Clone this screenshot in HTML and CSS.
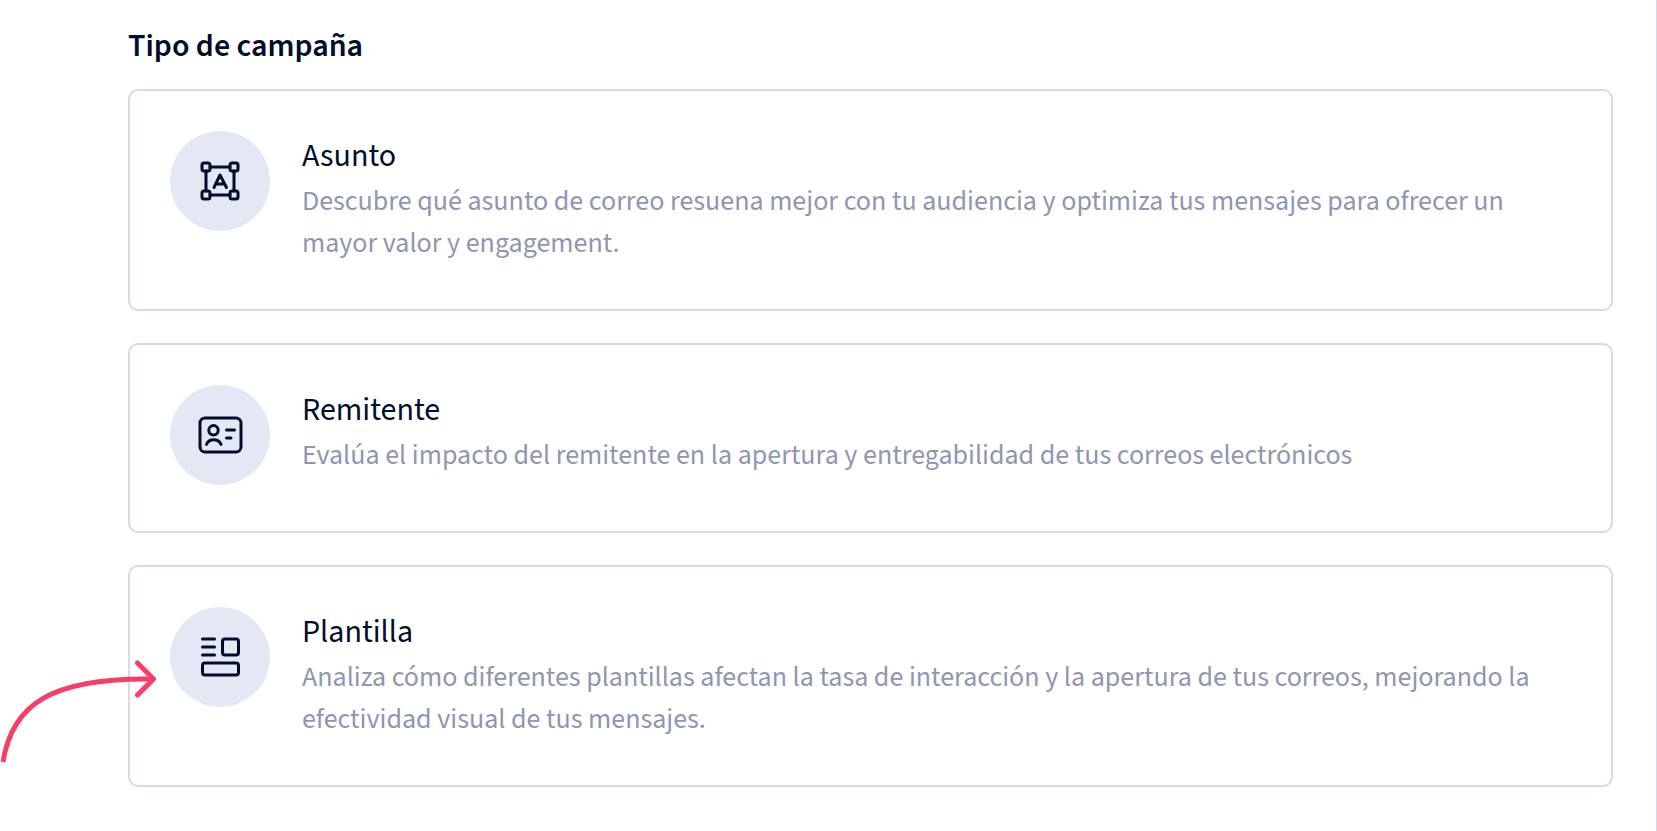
FILE: index.html
```html
<!DOCTYPE html>
<html lang="es">
<head>
<meta charset="utf-8">
<meta name="viewport" content="width=device-width, initial-scale=1">
<title>Tipo de campaña</title>
<link rel="stylesheet" href="styles.css">
</head>
<body>
<main class="panel">
  <h1 class="heading">Tipo de campaña</h1>
  <div class="options">
    <button type="button" class="card">
      <span class="badge">
        <svg class="icon" viewBox="0 0 48 48" aria-hidden="true">
          <rect x="6" y="6" width="8" height="8" rx="2"/>
          <rect x="34" y="6" width="8" height="8" rx="2"/>
          <rect x="6" y="34" width="8" height="8" rx="2"/>
          <rect x="34" y="34" width="8" height="8" rx="2"/>
          <path d="M14 10H34M14 38H34M10 14V34M38 14V34"/>
          <path d="M18 30.500L24 18L30.500 30.500M20.500 27H28.500"/>
        </svg>
      </span>
      <span class="text">
        <span class="title">Asunto</span>
        <span class="desc">Descubre qué asunto de correo resuena mejor con tu audiencia y optimiza tus mensajes para ofrecer un mayor valor y engagement.</span>
      </span>
    </button>
    <button type="button" class="card">
      <span class="badge">
        <svg class="icon" viewBox="0 0 48 48" aria-hidden="true">
          <rect x="4" y="7" width="41" height="34" rx="5"/>
          <circle cx="17.500" cy="19.300" r="4.700"/>
          <path d="M10.500 33.300C12 30 14.500 28.700 17.700 28.700S23.500 30 25 33.300"/>
          <path d="M30.500 19H38.500M30.500 27H35"/>
        </svg>
      </span>
      <span class="text">
        <span class="title">Remitente</span>
        <span class="desc">Evalúa el impacto del remitente en la apertura y entregabilidad de tus correos electrónicos</span>
      </span>
    </button>
    <button type="button" class="card">
      <span class="badge">
        <svg class="icon" viewBox="0 0 48 48" aria-hidden="true">
          <path d="M6.500 6H18.500M6.500 14H18.500M6.500 22H18.500"/>
          <rect x="26.500" y="6" width="16" height="16" rx="2.500"/>
          <rect x="6.500" y="30" width="36" height="12" rx="2.500"/>
        </svg>
      </span>
      <span class="text">
        <span class="title">Plantilla</span>
        <span class="desc">Analiza cómo diferentes plantillas afectan la tasa de interacción y la apertura de tus correos, mejorando la efectividad visual de tus mensajes.</span>
      </span>
      <svg class="arrow" viewBox="0 0 160 110" aria-hidden="true">
        <path d="M3 102C12 44 52 18 150 19"/>
        <path class="arrow-head" d="M137.500 3L153.500 19L137.500 35"/>
      </svg>
    </button>
  </div>
</main>
</body>
</html>
```

FILE: styles.css
```css
* {
  box-sizing: border-box;
}

body {
  margin: 0;
  background: #fff;
  color: #020d2c;
  font-family: "Source Sans 3", "Source Sans Pro", "Noto Sans CJK SC", sans-serif;
}

.panel {
  min-height: 100vh;
  padding: 20px 43px 43px 128px;
  border-right: 1px solid #d6d9e8;
}

.heading {
  margin: 0 0 17px;
  font-size: 32px;
  line-height: 52px;
  font-weight: 600;
}

.options {
  display: flex;
  flex-direction: column;
  gap: 32px;
}

.card {
  position: relative;
  display: flex;
  align-items: flex-start;
  gap: 32px;
  width: 100%;
  min-height: 190px;
  padding: 40px 40px 45px;
  border: 2px solid #d6d9e8;
  border-radius: 10px;
  background: #fff;
  color: inherit;
  font: inherit;
  text-align: left;
  cursor: pointer;
}

.badge {
  display: flex;
  flex: none;
  align-items: center;
  justify-content: center;
  width: 100px;
  height: 100px;
  border-radius: 50%;
  background: #e4e8f5;
}

.icon {
  width: 48px;
  height: 48px;
  fill: none;
  stroke: #020d2c;
  stroke-width: 3;
  stroke-linecap: round;
  stroke-linejoin: round;
}

.text {
  flex: 1;
  min-width: 0;
  padding-top: 1px;
}

.title,
.desc {
  display: block;
}

.title {
  font-size: 32px;
  line-height: 48px;
}

.desc {
  color: #8f96b0;
  font-size: 28px;
  line-height: 42px;
}

.arrow {
  position: absolute;
  left: -130px;
  top: 93px;
  width: 160px;
  height: 110px;
  fill: none;
  stroke: #f73e69;
  stroke-width: 5;
}

.arrow-head {
  stroke-linecap: round;
  stroke-linejoin: round;
}
```
